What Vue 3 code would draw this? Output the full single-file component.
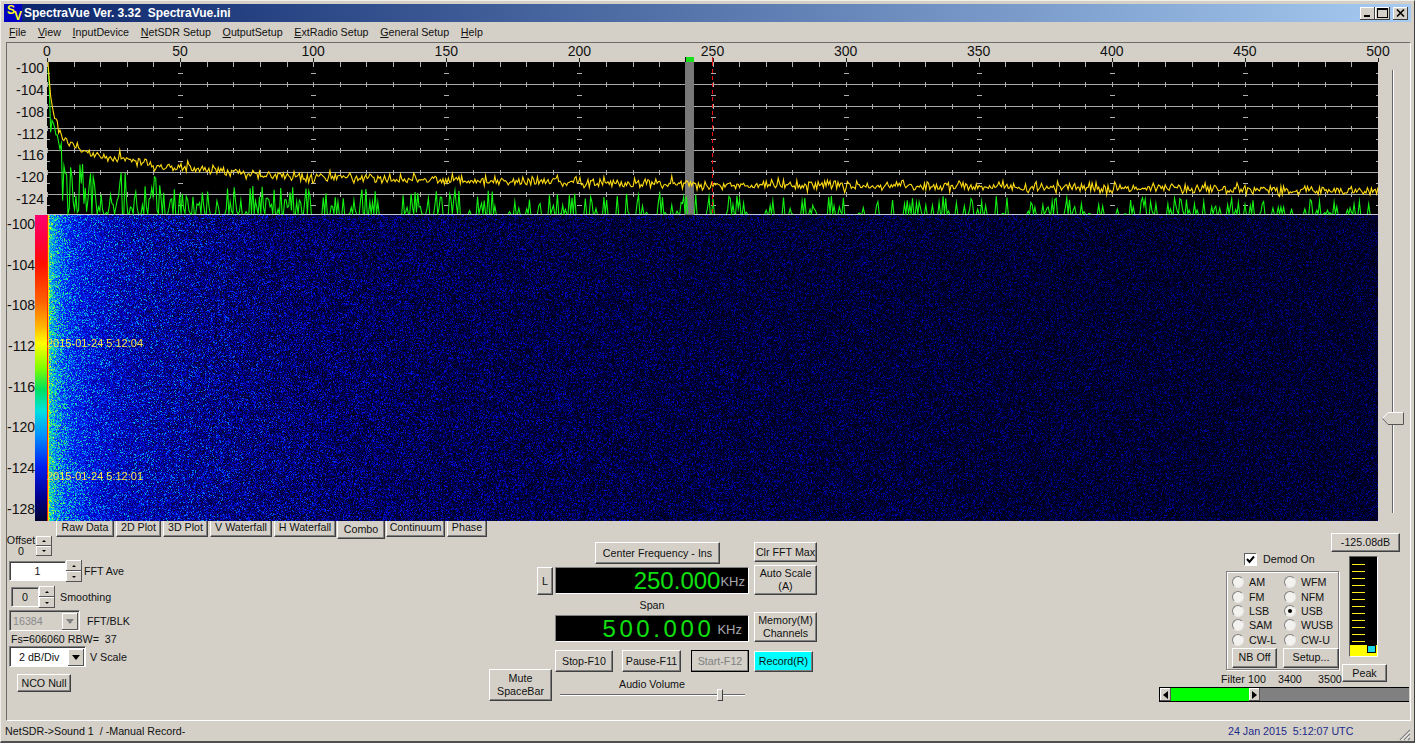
<script setup>
import { onMounted, ref } from 'vue';

const PLOT_W = 1331;
const SPEC_H = 153;
const FALL_H = 306;

const titleText = 'SpectraVue Ver. 3.32  SpectraVue.ini';
const fsText = 'Fs=606060 RBW=  37';
const statusLeft = 'NetSDR->Sound 1  / -Manual Record-';
const statusTime = '24 Jan 2015  5:12:07 UTC';

const menus = [
  ['F', 'ile'], ['V', 'iew'], ['I', 'nputDevice'], ['N', 'etSDR Setup'],
  ['O', 'utputSetup'], ['E', 'xtRadio Setup'], ['G', 'eneral Setup'], ['H', 'elp'],
];
const freqLabels = [0, 50, 100, 150, 200, 250, 300, 350, 400, 450, 500].map((v) => ({ v, left: (v / 500) * 100 }));
const specLabels = [-100, -104, -108, -112, -116, -120, -124];
const fallLabels = [-100, -104, -108, -112, -116, -120, -124, -128];
const tabs = [
  { name: 'Raw Data', w: 58 }, { name: '2D Plot', w: 45 }, { name: '3D Plot', w: 45 },
  { name: 'V Waterfall', w: 62 }, { name: 'H Waterfall', w: 62 }, { name: 'Combo', w: 48, on: true },
  { name: 'Continuum', w: 59 }, { name: 'Phase', w: 40 },
];
const modes = [
  ['AM'], ['WFM'], ['FM'], ['NFM'], ['LSB'], ['USB', true], ['SAM'], ['WUSB'], ['CW-L'], ['CW-U'],
];
const meterTicks = Array.from({ length: 12 });

const specCanvas = ref(null);
const fallCanvas = ref(null);

// small seeded generator so the noise is the same every load
function rng(seed) {
  let a = seed;
  return () => {
    a = (a + 0x6d2b79f5) | 0;
    let t = Math.imul(a ^ (a >>> 15), 1 | a);
    t = (t + Math.imul(t ^ (t >>> 7), 61 | t)) ^ t;
    return ((t ^ (t >>> 14)) >>> 0) / 4294967296;
  };
}

const CURVE = [
  [0, 0], [1, 15], [3, 38], [8, 62], [13, 73], [22, 82], [33, 88], [53, 94], [103, 103],
  [153, 108], [253, 115], [353, 118], [453, 119], [653, 123], [953, 125], [1331, 129],
];
function baseY(d) {
  for (let i = 1; i < CURVE.length; i++) {
    if (d <= CURVE[i][0]) {
      const [x0, y0] = CURVE[i - 1];
      const [x1, y1] = CURVE[i];
      return y0 + ((y1 - y0) * (d - x0)) / (x1 - x0);
    }
  }
  return 129;
}

function drawSpectrum() {
  const ctx = specCanvas.value.getContext('2d');
  const rand = rng(7);
  ctx.fillStyle = '#000';
  ctx.fillRect(0, 0, PLOT_W, SPEC_H);

  ctx.fillStyle = '#a8a8a8';
  for (let y = 22; y < 150; y += 22) ctx.fillRect(1, y, PLOT_W, 1);
  ctx.fillStyle = '#c4c4d4';
  ctx.fillRect(0, 152, PLOT_W, 1);
  ctx.fillStyle = '#b0b0b0';
  for (let i = 0; i <= 50; i++) {
    const x = Math.round((i * PLOT_W) / 50);
    for (let y = 0; y < 150; y += 22) ctx.fillRect(x, y === 0 ? 0 : y - 2, 1, 5);
    if (i % 5 === 0) {
      for (let y = 11; y < 150; y += 22) ctx.fillRect(x - 2, y, 5, 1);
    }
  }

  ctx.fillStyle = '#787878';
  ctx.fillRect(638, 0, 9, SPEC_H);

  const gauss = () => rand() + rand() + rand() - 1.5;
  ctx.lineWidth = 1.1;

  // green trace: instantaneous power, spikes off the floor, gaps where it sits on it
  ctx.strokeStyle = '#14f014';
  ctx.beginPath();
  let onFloor = false;
  for (let d = 0; d < PLOT_W; d += 1.33) {
    const yb = baseY(d);
    const p = 0.28 + 0.72 * Math.exp(-d / 200);
    let y = 152;
    if (d < 14) {
      y = Math.min(152, yb + 6 + 8 * -Math.log(1 - rand()));
    } else if (rand() < p) {
      const off = 9 + 3 * Math.exp(-d / 300);
      y = yb + off + (152 - yb - off) * Math.pow(rand(), d < 200 ? 0.85 : 1.1);
    }
    if (d === 0 || (onFloor && y === 152)) ctx.moveTo(d + 1, y);
    else ctx.lineTo(d + 1, y);
    onFloor = y === 152;
  }
  ctx.stroke();

  ctx.strokeStyle = '#ffdc14';
  ctx.beginPath();
  for (let d = 0; d < PLOT_W; d += 1.33) {
    const spike = rand() < 0.08 ? -5 * rand() : 0;
    const y = baseY(d) + (d < 5 ? 0 : gauss() * 5 + spike);
    if (d === 0) ctx.moveTo(d + 1, y);
    else ctx.lineTo(d + 1, y);
  }
  ctx.stroke();

  ctx.fillStyle = '#f01010';
  for (let y = 0; y < SPEC_H; y += 7) ctx.fillRect(665, y, 1, 4);
}

const STOPS = [
  [0, 0, 0, 0], [0.12, 0, 0, 70], [0.3, 0, 0, 190], [0.48, 0, 40, 255], [0.66, 0, 190, 235],
  [0.82, 60, 255, 90], [1, 250, 255, 0],
];
function colour(v) {
  for (let i = 1; i < STOPS.length; i++) {
    if (v <= STOPS[i][0]) {
      const a = STOPS[i - 1];
      const b = STOPS[i];
      const t = (v - a[0]) / (b[0] - a[0]);
      return [a[1] + (b[1] - a[1]) * t, a[2] + (b[2] - a[2]) * t, a[3] + (b[3] - a[3]) * t];
    }
  }
  return [250, 255, 0];
}

function drawWaterfall() {
  const ctx = fallCanvas.value.getContext('2d');
  const rand = rng(23);
  const img = ctx.createImageData(PLOT_W, FALL_H);
  const px = img.data;
  for (let y = 0; y < FALL_H; y++) {
    const grow = 1 + (0.35 * y) / FALL_H;
    for (let x = 0; x < PLOT_W; x++) {
      const d = x / grow;
      const hot = Math.exp(-d / 90);
      const mean = 0.068 + 0.3 * Math.exp(-d / 16) + 0.28 * Math.exp(-d / 100) + 0.1 * Math.exp(-d / 450);
      // the noise tightens up close to DC and goes sparse further out
      const e = Math.min(3.5, -Math.log(1 - rand()));
      const v = mean * (0.2 + 0.58 * hot + (1 - 0.72 * hot) * Math.pow(e, 0.9 - 0.3 * hot));
      let c = colour(Math.min(1, v));
      if (x === 0) c = [255, 40, 0];
      if (x === 1) c = [240, 220, 20];
      const i = (y * PLOT_W + x) * 4;
      px[i] = c[0];
      px[i + 1] = c[1];
      px[i + 2] = c[2];
      px[i + 3] = 255;
    }
  }
  ctx.putImageData(img, 0, 0);
}

onMounted(() => {
  drawSpectrum();
  drawWaterfall();
});
</script>

<template>
  <div class="window">
    <header class="titlebar">
      <div class="app-icon"><span class="icon-s">S</span><span class="icon-v">V</span></div>
      <span class="title-text">{{ titleText }}</span>
      <div class="caption-btns">
        <button class="cap-btn"><span class="cap-min" /></button>
        <button class="cap-btn"><span class="cap-max" /></button>
        <button class="cap-btn cap-close">
          <svg width="9" height="8" viewBox="0 0 9 8"><path d="M1 0.5 L8 7.5 M8 0.5 L1 7.5" stroke="#000" stroke-width="1.6" fill="none" /></svg>
        </button>
      </div>
    </header>

    <nav class="menubar">
      <span v-for="m in menus" :key="m[1]"><u>{{ m[0] }}</u>{{ m[1] }}</span>
    </nav>

    <main class="client">
      <section class="scope">
        <div class="ruler">
          <span v-for="f in freqLabels" :key="f.v" class="ruler-label" :style="{ left: f.left + '%' }">{{ f.v }}</span>
          <span v-for="f in freqLabels" :key="'t' + f.v" class="ruler-tick" :style="{ left: f.left + '%' }" />
          <span class="tune-mark" />
          <span class="center-mark" />
        </div>

        <div class="spec-labels">
          <span v-for="l in specLabels" :key="l">{{ l }}</span>
        </div>
        <canvas ref="specCanvas" class="plot spec-plot" :width="PLOT_W" :height="SPEC_H" />

        <div class="fall-side">
          <div class="fall-labels">
            <span v-for="l in fallLabels" :key="l">{{ l }}</span>
          </div>
          <div class="colour-strip" />
        </div>
        <div class="fall-wrap">
          <canvas ref="fallCanvas" class="plot" :width="PLOT_W" :height="FALL_H" />
          <span class="stamp stamp-a">2015-01-24 5:12:04</span>
          <span class="stamp stamp-b">2015-01-24 5:12:01</span>
        </div>

        <div class="slider-col">
          <div class="v-track" />
          <svg class="v-thumb" width="22" height="13" viewBox="0 0 22 13">
            <path d="M0.5 6.5 L6 0.5 H21.5 V12.5 H6 Z" fill="#d4d0c8" stroke="#fff" />
            <path d="M0.5 6.5 L6 12.5 H21.5 V0.5" fill="none" stroke="#555" />
          </svg>
        </div>
      </section>

      <section class="panel">
        <div class="panel-left">
          <div class="tabs">
            <div v-for="t in tabs" :key="t.name" class="tab" :class="{ 'tab-on': t.on }" :style="{ width: t.w + 'px' }">{{ t.name }}</div>
          </div>

          <div class="offset-row">
            <div class="offset-text"><span>Offset</span><span>0</span></div>
            <div class="spin spin-small">
              <button class="spin-btn"><i class="tri-up" /></button>
              <button class="spin-btn"><i class="tri-down" /></button>
            </div>
          </div>

          <div class="ctl-row ave-row">
            <div class="edit edit-ave">1</div>
            <div class="spin">
              <button class="spin-btn"><i class="tri-up" /></button>
              <button class="spin-btn"><i class="tri-down" /></button>
            </div>
            <span class="ctl-label">FFT Ave</span>
          </div>

          <div class="ctl-row smooth-row">
            <div class="edit edit-smooth">0</div>
            <div class="spin">
              <button class="spin-btn"><i class="tri-up" /></button>
              <button class="spin-btn"><i class="tri-down" /></button>
            </div>
            <span class="ctl-label smooth-label">Smoothing</span>
          </div>

          <div class="ctl-row blk-row">
            <div class="combo combo-off">
              <span>16384</span>
              <button class="combo-btn"><i class="tri-combo" /></button>
            </div>
            <span class="ctl-label blk-label">FFT/BLK</span>
          </div>

          <div class="fs-text">{{ fsText }}</div>

          <div class="ctl-row scale-row">
            <div class="combo combo-on">
              <span>2 dB/Div</span>
              <button class="combo-btn"><i class="tri-combo dark" /></button>
            </div>
            <span class="ctl-label scale-label">V Scale</span>
          </div>

          <button class="btn nco-btn">NCO Null</button>
        </div>

        <div class="panel-center">
          <div class="col-a">
            <button class="btn l-btn">L</button>
            <button class="btn mute-btn">Mute<br>SpaceBar</button>
          </div>
          <div class="col-b">
            <button class="btn center-btn">Center Frequency - Ins</button>
            <div class="readout readout-freq">
              <span class="digits">250.000</span><span class="unit">KHz</span>
            </div>
            <div class="span-label">Span</div>
            <div class="readout readout-span">
              <span class="digits digits-wide">500.000</span><span class="unit">KHz</span>
            </div>
            <div class="transport">
              <button class="btn stop-btn">Stop-F10</button>
              <button class="btn pause-btn">Pause-F11</button>
              <button class="btn start-btn">Start-F12</button>
            </div>
            <div class="volume-label">Audio Volume</div>
            <div class="volume">
              <div class="h-track" />
              <div class="h-thumb" />
            </div>
          </div>
          <div class="col-c">
            <button class="btn clr-btn">Clr FFT Max</button>
            <button class="btn auto-btn">Auto Scale<br>(A)</button>
            <button class="btn mem-btn">Memory(M)<br>Channels</button>
            <button class="btn rec-btn">Record(R)</button>
          </div>
        </div>

        <div class="panel-right">
          <div class="right-top">
            <div class="mode-col">
              <label class="demod">
                <span class="check">
                  <svg width="9" height="9" viewBox="0 0 9 9"><path d="M1 4 L3.5 7 L8 1.5" stroke="#000" stroke-width="2" fill="none" /></svg>
                </span>
                Demod On
              </label>
              <div class="mode-group">
                <div class="mode-grid">
                  <div v-for="m in modes" :key="m[0]" class="mode">
                    <span class="radio" :class="{ 'radio-on': m[1] }" />
                    <span>{{ m[0] }}</span>
                  </div>
                </div>
                <div class="mode-btns">
                  <button class="btn nb-btn">NB Off</button>
                  <button class="btn setup-btn">Setup...</button>
                </div>
              </div>
              <div class="filter-row">
                <span>Filter</span><span>100</span><span>3400</span><span>3500</span>
              </div>
            </div>
            <div class="meter-col">
              <button class="btn db-btn">-125.08dB</button>
              <div class="meter">
                <span v-for="(_, i) in meterTicks" :key="i" class="meter-tick" />
                <div class="meter-fill" />
                <div class="meter-peak" />
              </div>
              <button class="btn peak-btn">Peak</button>
            </div>
          </div>
          <div class="filter-bar">
            <button class="bar-btn"><i class="tri-left" /></button>
            <div class="bar-green" />
            <button class="bar-btn"><i class="tri-right" /></button>
            <div class="bar-rest" />
          </div>
        </div>
      </section>
    </main>

    <footer class="statusbar">
      <span class="status-left">{{ statusLeft }}</span>
      <span class="status-time">{{ statusTime }}</span>
      <svg class="grip" width="13" height="13" viewBox="0 0 13 13">
        <path d="M12 2 L2 12 M12 6 L6 12 M12 10 L10 12" stroke="#808080" stroke-width="1.2" fill="none" />
        <path d="M12 3.5 L3.5 12 M12 7.5 L7.5 12" stroke="#fff" stroke-width="1" fill="none" />
      </svg>
    </footer>
  </div>
</template>

<style>
html, body { margin: 0; background: #d4d0c8; overflow: hidden; }
</style>

<style scoped>
.window {
  width: 1415px;
  height: 743px;
  box-sizing: border-box;
  padding: 3px 3px 0 4px;
  display: flex;
  flex-direction: column;
  background: #d4d0c8;
  border-top: 1px solid #f0eee8;
  border-left: 1px solid #f0eee8;
  border-right: 1px solid #404040;
  border-bottom: 2px solid #505050;
  font-family: "Liberation Sans", Arial, sans-serif;
  font-size: 10.7px;
  color: #111;
  overflow: hidden;
}
button {
  font: inherit;
  color: inherit;
  padding: 0;
  margin: 0;
}
i { display: block; }

/* title bar */
.titlebar {
  height: 18px;
  flex: none;
  display: flex;
  align-items: center;
  margin-left: -1px;
  background: linear-gradient(90deg, #0a246a 0%, #a6caf0 100%);
}
.app-icon {
  width: 18px;
  height: 18px;
  position: relative;
  flex: none;
  background: #0000c0;
  color: #ffff20;
  font-weight: bold;
  font-size: 12px;
  line-height: 12px;
}
.icon-s { position: absolute; left: 3px; top: 0; }
.icon-v { position: absolute; left: 10px; top: 6px; }
.title-text {
  margin-left: 2px;
  color: #fff;
  font-weight: bold;
  font-size: 12px;
  white-space: pre;
}
.caption-btns {
  margin-left: auto;
  margin-right: 3px;
  display: flex;
}
.cap-btn {
  width: 15px;
  height: 13px;
  display: flex;
  align-items: center;
  justify-content: center;
  position: relative;
  background: #d4d0c8;
  border: none;
  box-shadow: inset -1px -1px #404040, inset 1px 1px #fff;
}
.cap-close { margin-left: 3px; }
.cap-min { position: absolute; left: 4px; bottom: 3px; width: 6px; height: 2px; background: #000; }
.cap-max { width: 9px; height: 7px; border: 1px solid #000; border-top-width: 2px; }

/* menu */
.menubar {
  height: 20px;
  flex: none;
  display: flex;
  align-items: center;
  gap: 11.7px;
  padding-left: 4px;
}

/* client area */
.client {
  flex: 1;
  min-height: 0;
  display: flex;
  flex-direction: column;
  margin-left: 1px;
  border-top: 1px solid #6c6c6c;
  border-left: 1px solid #6c6c6c;
  border-right: 1px solid #fff;
  border-bottom: 1px solid #fff;
}
.scope {
  display: grid;
  grid-template-columns: 40px 1331px 1fr;
  grid-template-rows: 19px 153px 306px;
  flex: none;
}
.ruler {
  grid-column: 2;
  grid-row: 1;
  position: relative;
  font-size: 14px;
}
.ruler-label {
  position: absolute;
  top: 1px;
  line-height: 15px;
  transform: translateX(-50%);
}
.ruler-tick {
  position: absolute;
  bottom: 0;
  width: 1px;
  height: 4px;
  background: #222;
}
.tune-mark {
  position: absolute;
  left: 638px;
  bottom: 0;
  width: 9px;
  height: 5px;
  background: #18e018;
  box-shadow: inset 1px 0 #000;
}
.center-mark {
  position: absolute;
  left: 665px;
  bottom: 0;
  width: 1px;
  height: 5px;
  background: #f01010;
}
.plot { display: block; }
.spec-plot { grid-column: 2; grid-row: 2; }
.slider-col {
  grid-row: 1 / 4;
  grid-column: 3;
  position: relative;
}
.v-track {
  width: 1px;
  height: 443px;
  margin: 27px 0 0 14px;
  background: #666;
  border-right: 1px solid #fff;
}
.v-thumb {
  position: absolute;
  left: 4px;
  top: 369px;
}
.spec-labels {
  grid-column: 1;
  grid-row: 2;
  display: flex;
  flex-direction: column;
  align-items: flex-end;
  padding: 0 3px 0 0;
  font-size: 14px;
}
.spec-labels span { height: 22px; line-height: 13px; }
.fall-side {
  grid-column: 1;
  grid-row: 3;
  display: flex;
  justify-content: flex-end;
}
.fall-labels {
  display: flex;
  flex-direction: column;
  align-items: flex-end;
  font-size: 14px;
  padding-top: 2px;
}
.fall-labels span {
  flex: none;
  height: 40.7px;
  line-height: 14px;
}
.colour-strip {
  width: 12px;
  background: linear-gradient(180deg,
    #ff0070 0%, #ff0040 8%, #ff1000 16%, #ff6000 28%, #ffb000 36%, #ffff00 42%,
    #80ff00 50%, #00e060 57%, #00e0e0 64%, #0090ff 72%, #0020f0 82%, #000090 92%, #000030 100%);
}
.fall-wrap { position: relative; grid-column: 2; grid-row: 3; }
.stamp {
  position: absolute;
  left: 0;
  color: #f6e64a;
  font-size: 11px;
  line-height: 12px;
  white-space: nowrap;
}
.stamp-a { top: 122px; }
.stamp-b { top: 255px; }

/* panel */
.panel {
  flex: 1;
  display: flex;
}
.panel-left {
  flex: none;
  width: 482px;
  display: flex;
  flex-direction: column;
  align-items: flex-start;
}
.tabs {
  display: flex;
  gap: 2px;
  margin-left: 49px;
  height: 16px;
  flex: none;
}
.tab {
  box-sizing: border-box;
  height: 16px;
  line-height: 13px;
  text-align: center;
  border-right: 1px solid #404040;
  border-bottom: 1px solid #404040;
  border-left: 1px solid #fff;
  box-shadow: inset -1px -1px #808080;
  white-space: nowrap;
}
.tab-on {
  height: 18px;
  line-height: 17px;
  margin: 0 -1px;
}
.offset-row {
  display: flex;
  align-items: flex-start;
  margin-top: -1px;
}
.offset-text {
  width: 28px;
  margin-top: -1px;
  display: flex;
  flex-direction: column;
  align-items: center;
  line-height: 11px;
}
.spin {
  display: flex;
  flex-direction: column;
  width: 16px;
  height: 22px;
  flex: none;
}
.spin-small { height: 20px; margin-left: 1px; }
.spin-btn {
  flex: 1;
  display: flex;
  align-items: center;
  justify-content: center;
  background: #d4d0c8;
  border: none;
  box-shadow: inset -1px -1px #555, inset 1px 1px #fff;
}
.tri-up { border: 2px solid transparent; border-top: 0; border-bottom: 2px solid #000; }
.tri-down { border: 2px solid transparent; border-bottom: 0; border-top: 2px solid #000; }
.ctl-row {
  display: flex;
  align-items: center;
  flex: none;
}
.ctl-label { margin-left: 2px; white-space: nowrap; }
.edit {
  box-sizing: border-box;
  display: flex;
  align-items: center;
  justify-content: center;
  border-top: 1px solid #808080;
  border-left: 1px solid #808080;
  border-bottom: 1px solid #fff;
  border-right: 1px solid #fff;
}
.ave-row { margin: 3px 0 0 2px; height: 22px; }
.edit-ave {
  width: 57px;
  height: 20px;
  background: #fff;
  box-shadow: inset 1px 1px #404040;
}
.smooth-row { margin: 5px 0 0 4px; height: 20px; }
.edit-smooth {
  width: 28px;
  height: 20px;
  box-shadow: inset 1px 1px #404040;
}
.smooth-label { margin-left: 5px; }
.blk-row { margin: 3px 0 0 2px; height: 21px; }
.combo {
  box-sizing: border-box;
  display: flex;
  align-items: center;
  justify-content: space-between;
  height: 21px;
  border-top: 1px solid #808080;
  border-left: 1px solid #808080;
  border-bottom: 1px solid #fff;
  border-right: 1px solid #fff;
  box-shadow: inset 1px 1px #404040;
}
.combo-off { width: 71px; color: #8a8a8a; padding-left: 3px; }
.combo-on { width: 77px; background: #fff; padding-left: 9px; }
.combo-btn {
  width: 16px;
  height: 17px;
  margin: 1px 1px 0 0;
  display: flex;
  align-items: center;
  justify-content: center;
  background: #d4d0c8;
  border: none;
  box-shadow: inset -1px -1px #555, inset 1px 1px #fff;
}
.tri-combo { border: 4px solid transparent; border-bottom: 0; border-top: 5px solid #808080; }
.tri-combo.dark { border-top-color: #000; }
.blk-label { margin-left: 7px; }
.fs-text {
  margin: 2px 0 0 4px;
  height: 13px;
  line-height: 13px;
  white-space: pre;
}
.scale-row { margin: 0 0 0 2px; height: 21px; }
.scale-label { margin-left: 4px; }
.btn {
  box-sizing: border-box;
  display: flex;
  align-items: center;
  justify-content: center;
  flex: none;
  text-align: center;
  line-height: 13px;
  background: #d4d0c8;
  border-top: 1px solid #fff;
  border-left: 1px solid #fff;
  border-right: 1px solid #404040;
  border-bottom: 1px solid #404040;
  box-shadow: inset -1px -1px #808080;
  white-space: nowrap;
}
.nco-btn { width: 54px; height: 18px; margin: 7px 0 0 10px; }

.panel-center {
  flex: none;
  display: flex;
  align-items: flex-start;
}
.col-a {
  width: 64px;
  margin-right: 2px;
  display: flex;
  flex-direction: column;
  padding-top: 46px;
}
.l-btn { width: 16px; height: 28px; align-self: flex-end; }
.mute-btn { width: 63px; height: 32px; margin-top: 74px; }
.col-b {
  width: 194px;
  margin-right: 5px;
  padding-top: 21px;
  display: flex;
  flex-direction: column;
}
.center-btn { width: 125px; height: 22px; margin-left: 40px; }
.readout {
  box-sizing: border-box;
  height: 27px;
  display: flex;
  align-items: center;
  justify-content: flex-end;
  background: #000;
  border-bottom: 1px solid #fff;
  border-right: 1px solid #fff;
  border-top: 1px solid #808080;
  border-left: 1px solid #808080;
}
.readout-freq { margin-top: 3px; padding-right: 3px; }
.readout-span { padding-right: 6px; }
.digits {
  color: #10e010;
  font-size: 24px;
  line-height: 24px;
}
.digits-wide { letter-spacing: 3.6px; margin-right: 3px; }
.unit {
  color: #a8a8b0;
  font-size: 13px;
  margin-top: 2px;
}
.span-label {
  height: 21px;
  line-height: 22px;
  text-align: center;
}
.transport {
  display: flex;
  margin-top: 8px;
}
.transport .btn { height: 22px; }
.stop-btn { width: 58px; }
.pause-btn { width: 59px; margin-left: 9px; }
.start-btn {
  width: 58px;
  margin-left: 10px;
  color: #808080;
  outline: 1px solid #000;
  outline-offset: -1px;
}
.volume-label {
  margin-top: 5px;
  height: 14px;
  line-height: 14px;
  text-align: center;
}
.volume {
  position: relative;
  width: 185px;
  height: 12px;
  margin: -2px 0 0 5px;
  display: flex;
  align-items: center;
}
.h-track {
  width: 100%;
  height: 1px;
  background: #666;
  border-bottom: 1px solid #fff;
}
.h-thumb {
  position: absolute;
  left: 157px;
  top: 0;
  box-sizing: border-box;
  width: 6px;
  height: 12px;
  background: #d4d0c8;
  border-top: 1px solid #fff;
  border-left: 1px solid #fff;
  border-right: 1px solid #404040;
  border-bottom: 1px solid #404040;
}
.col-c {
  width: 64px;
  padding-top: 21px;
  display: flex;
  flex-direction: column;
}
.clr-btn { width: 63px; height: 20px; }
.auto-btn { width: 63px; height: 30px; margin-top: 3px; }
.mem-btn { width: 63px; height: 30px; margin-top: 17px; }
.rec-btn {
  width: 59px;
  height: 21px;
  margin-top: 9px;
  background: #00ffff;
}

.panel-right {
  margin-left: auto;
  width: 252px;
  flex: none;
  padding-top: 12px;
  display: flex;
  flex-direction: column;
}
.right-top {
  display: flex;
  height: 154px;
  flex: none;
}
.mode-col {
  width: 121px;
  margin-left: 63px;
  flex: none;
  padding-top: 20px;
  box-sizing: border-box;
}
.demod {
  display: flex;
  align-items: center;
  height: 12px;
  margin-left: 23px;
  gap: 7px;
}
.check {
  box-sizing: border-box;
  width: 12px;
  height: 12px;
  display: flex;
  align-items: center;
  justify-content: center;
  background: #fff;
  border-top: 1px solid #606060;
  border-left: 1px solid #606060;
  box-shadow: 1px 1px #fff;
}
.mode-group {
  box-sizing: border-box;
  width: 113px;
  height: 99px;
  margin: 6px 0 0 5px;
  padding: 3px 0 0 5px;
  border: 1px solid #808080;
  box-shadow: inset 1px 1px #fff, 1px 1px #fff;
}
.mode-grid {
  display: grid;
  grid-template-columns: 52px 52px;
  grid-auto-rows: 14.4px;
}
.mode {
  display: flex;
  align-items: center;
  gap: 5px;
}
.radio {
  box-sizing: border-box;
  width: 12px;
  height: 12px;
  border-radius: 50%;
  display: flex;
  align-items: center;
  justify-content: center;
  background: #f4f2ee;
  border: 1px solid;
  border-color: #808080 #e8e8e8 #e8e8e8 #808080;
}
.radio-on::after {
  content: "";
  width: 4px;
  height: 4px;
  border-radius: 50%;
  background: #000;
}
.mode-btns {
  display: flex;
  gap: 6px;
  margin-top: 1px;
}
.nb-btn { width: 45px; height: 20px; }
.setup-btn { width: 56px; height: 20px; }
.filter-row {
  margin-top: 2px;
  display: flex;
  white-space: nowrap;
  line-height: 14px;
}
.filter-row span:nth-child(1) { width: 27px; }
.filter-row span:nth-child(2) { width: 30px; }
.filter-row span:nth-child(3) { width: 40px; }
.meter-col {
  display: flex;
  flex-direction: column;
  align-items: flex-start;
  flex: none;
}
.db-btn { width: 69px; height: 19px; margin-left: -11px; }
.meter {
  position: relative;
  box-sizing: border-box;
  width: 29px;
  height: 101px;
  margin: 4px 0 0 7px;
  padding: 7px 0 0 2px;
  background: #000;
  border-top: 1px solid #606060;
  border-left: 1px solid #606060;
  border-bottom: 1px solid #fff;
  border-right: 1px solid #fff;
}
.meter-tick {
  display: block;
  width: 13px;
  height: 1px;
  margin-bottom: 6px;
  background: #ffee20;
}
.meter-fill {
  position: absolute;
  left: 0;
  right: 0;
  bottom: 0;
  height: 11px;
  background: #ffff00;
}
.meter-peak {
  position: absolute;
  right: 1px;
  bottom: 3px;
  width: 9px;
  height: 8px;
  background: #18d8e8;
  border: 1px solid #000;
  box-sizing: border-box;
}
.peak-btn { width: 45px; height: 18px; margin-top: 7px; }
.filter-bar {
  display: flex;
  width: 250px;
  height: 15px;
  box-sizing: border-box;
  margin-left: 1px;
  border-top: 1px solid #000;
  border-bottom: 1px solid #000;
  border-left: 1px solid #000;
}
.bar-btn {
  width: 11px;
  flex: none;
  display: flex;
  align-items: center;
  justify-content: center;
  background: #d4d0c8;
  border: none;
  box-shadow: inset -1px -1px #555, inset 1px 1px #fff;
}
.tri-left { border: 4px solid transparent; border-left: 0; border-right: 5px solid #000; }
.tri-right { border: 4px solid transparent; border-right: 0; border-left: 5px solid #000; }
.bar-green { width: 78px; background: #00ff00; }
.bar-rest { flex: 1; background: #808080; }

/* status bar */
.statusbar {
  height: 20px;
  flex: none;
  position: relative;
  display: flex;
  align-items: center;
}
.status-left, .status-time { white-space: pre; }
.status-time {
  position: absolute;
  left: 1223px;
  color: #1c2a88;
}
.grip {
  position: absolute;
  right: 0;
  bottom: 0;
}
</style>
